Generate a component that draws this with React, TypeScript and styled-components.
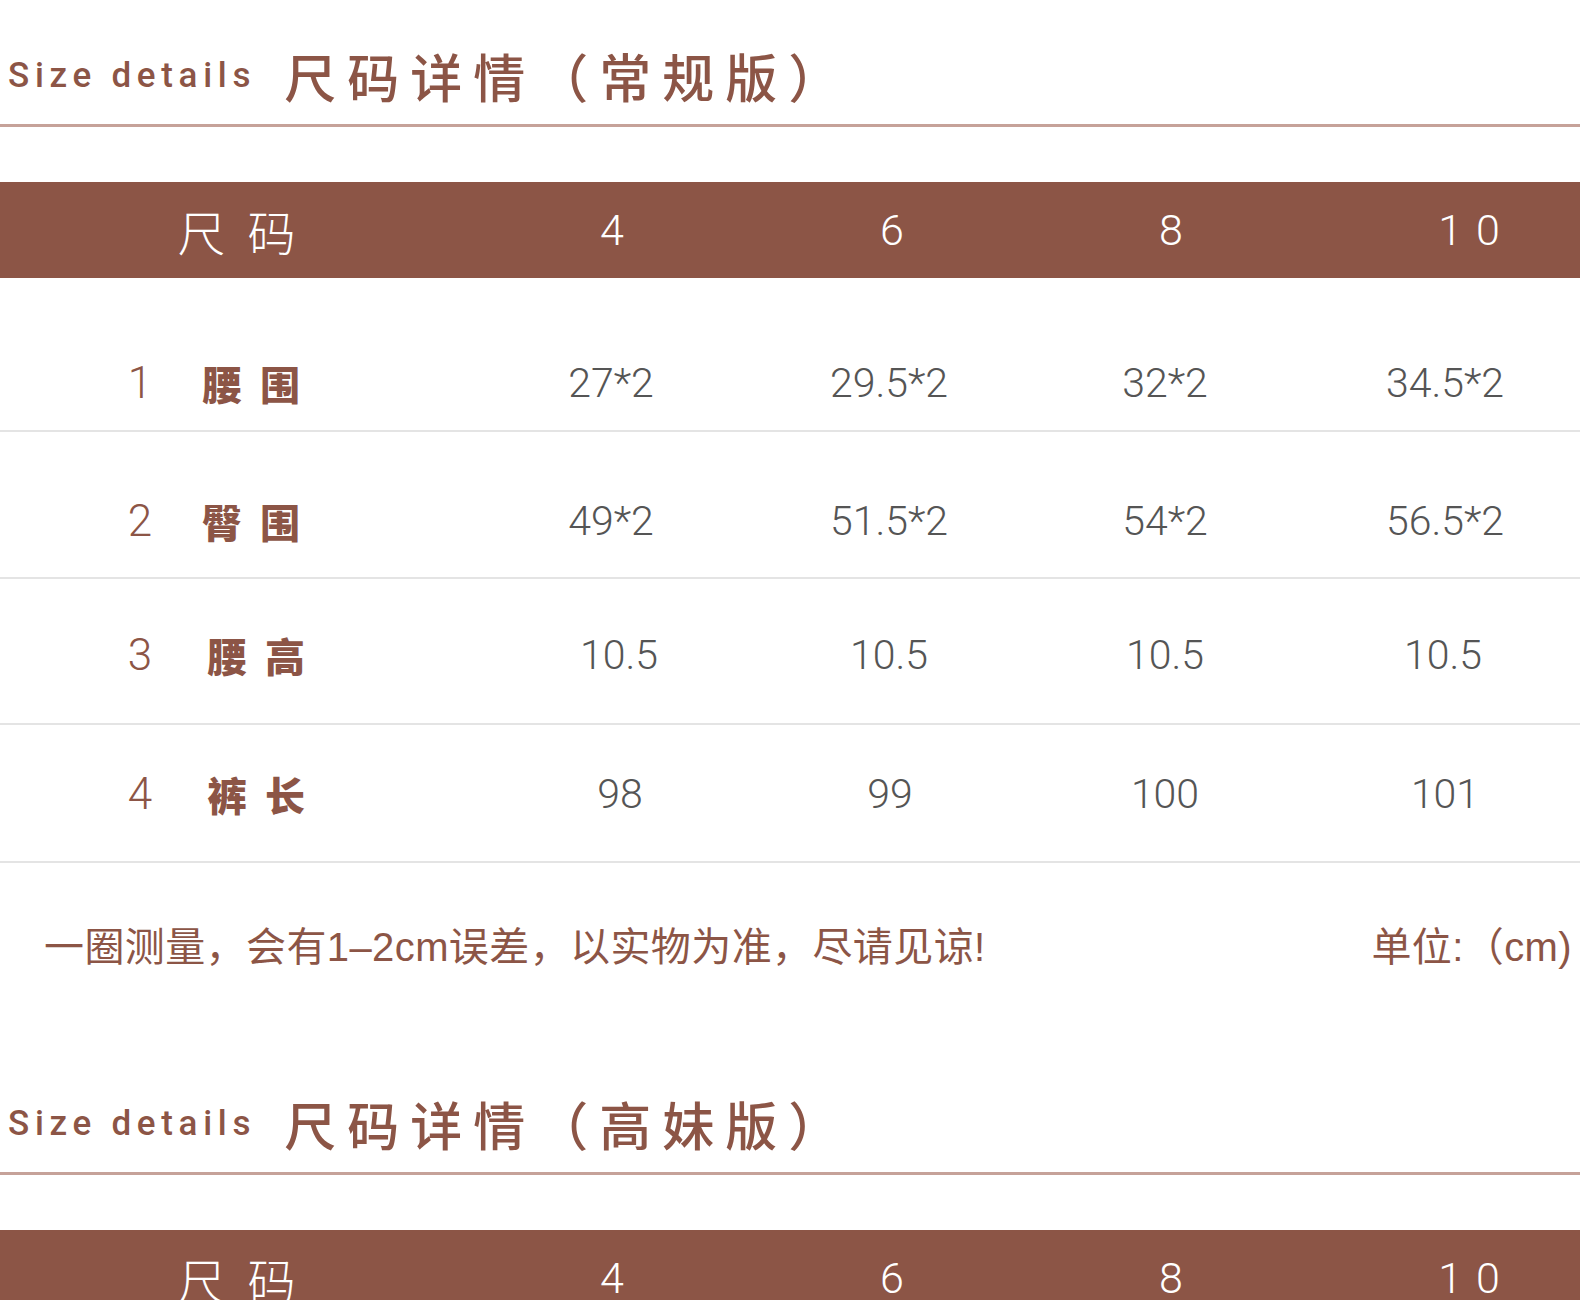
import React from 'react';
import styled, { createGlobalStyle } from 'styled-components';

const BROWN = '#8c5546';
const CJK = '"Noto Sans CJK SC", "Noto Sans CJK JP", sans-serif';
const LATIN = 'Roboto, "Liberation Sans", "Noto Sans CJK SC", sans-serif';
const NOTE_FONT = '"Liberation Sans", "Noto Sans CJK SC", sans-serif';

const GlobalStyle = createGlobalStyle`
  * { box-sizing: border-box; }
  html, body {
    margin: 0;
    padding: 0;
    background: #fff;
  }
`;

const Page = styled.div`
  width: 1580px;
  display: flex;
  flex-direction: column;
  background: #fff;
`;

const TitleBar = styled.div`
  height: 127px;
  padding: 27px 0 0 8px;
  display: flex;
  align-items: center;
  gap: 28px;
  border-bottom: 3px solid #c6a299;
`;

const TitleEn = styled.span`
  font-family: ${LATIN};
  font-weight: 500;
  font-size: 35px;
  letter-spacing: 5.7px;
  line-height: 1;
  color: ${BROWN};
`;

const TitleCn = styled.span`
  font-family: ${CJK};
  font-weight: 500;
  font-size: 52px;
  letter-spacing: 11px;
  line-height: 1;
  color: ${BROWN};
`;

const HeaderBar = styled.div`
  margin-top: 55px;
  height: 96px;
  background: ${BROWN};
  display: grid;
  grid-template-columns: 473px 278px 282px 276px 1fr;
  align-items: center;
  color: #fff;
`;

const HeaderCell = styled.div<{ $indent?: number; $cjk?: boolean }>`
  text-align: center;
  padding-left: ${(p) => p.$indent ?? 0}px;
  font-family: ${(p) => (p.$cjk ? CJK : LATIN)};
  font-weight: 300;
  font-size: ${(p) => (p.$cjk ? 48 : 43)}px;
  letter-spacing: ${(p) => (p.$cjk ? 22 : p.$indent ? 14 : 0)}px;
  line-height: 1;
`;

const Row = styled.div<{ $height: number; $pad: number }>`
  height: ${(p) => p.$height}px;
  padding-top: ${(p) => p.$pad}px;
  display: grid;
  grid-template-columns: 472px 278px 278px 274px 1fr;
  align-items: start;
  border-bottom: 2px solid #e4e4e4;
`;

const LabelCell = styled.div`
  height: 50px;
  display: flex;
  align-items: center;
  padding-left: 120px;
`;

const Num = styled.span`
  width: 40px;
  text-align: center;
  font-family: ${LATIN};
  font-weight: 300;
  font-size: 44px;
  line-height: 50px;
  color: ${BROWN};
`;

const Name = styled.span<{ $indent: number }>`
  margin-left: ${(p) => p.$indent}px;
  font-family: ${CJK};
  font-weight: 900;
  font-size: 40px;
  letter-spacing: 18px;
  line-height: 50px;
  color: ${BROWN};
`;

const Value = styled.div<{ $shift?: number }>`
  text-align: center;
  padding-left: ${(p) => p.$shift ?? 0}px;
  font-family: ${LATIN};
  font-weight: 300;
  font-size: 41px;
  line-height: 50px;
  color: #555;
`;

const Note = styled.div`
  height: 185px;
  padding: 59px 8px 0 44px;
  display: flex;
  justify-content: space-between;
  align-items: flex-start;
  font-family: ${NOTE_FONT};
  font-size: 40px;
  letter-spacing: 0.4px;
  line-height: 50px;
  color: ${BROWN};
`;

const sizes = ['4', '6', '8', '10'];

const rows = [
  { n: '1', name: '腰围', indent: 42, height: 154, pad: 80, shift: [0, 0, 0, 8], values: ['27*2', '29.5*2', '32*2', '34.5*2'] },
  { n: '2', name: '臀围', indent: 42, height: 147, pad: 64, shift: [0, 0, 0, 8], values: ['49*2', '51.5*2', '54*2', '56.5*2'] },
  { n: '3', name: '腰高', indent: 47, height: 146, pad: 51, shift: [16, 0, 0, 4], values: ['10.5', '10.5', '10.5', '10.5'] },
  { n: '4', name: '裤长', indent: 47, height: 138, pad: 44, shift: [18, 2, 0, 8], values: ['98', '99', '100', '101'] },
];

const SectionTitle = ({ edition }: { edition: string }) => (
  <TitleBar>
    <TitleEn>Size details</TitleEn>
    <TitleCn>尺码详情（{edition}）</TitleCn>
  </TitleBar>
);

const SizeHeader = () => (
  <HeaderBar>
    <HeaderCell $cjk $indent={22}>尺码</HeaderCell>
    {sizes.map((s) => (
      <HeaderCell key={s} $indent={s === '10' ? 63 : 0}>
        {s}
      </HeaderCell>
    ))}
  </HeaderBar>
);

export default function App() {
  return (
    <Page>
      <GlobalStyle />
      <SectionTitle edition="常规版" />
      <SizeHeader />
      {rows.map((r) => (
        <Row key={r.n} $height={r.height} $pad={r.pad}>
          <LabelCell>
            <Num>{r.n}</Num>
            <Name $indent={r.indent}>{r.name}</Name>
          </LabelCell>
          {r.values.map((v, i) => (
            <Value key={i} $shift={r.shift[i]}>
              {v}
            </Value>
          ))}
        </Row>
      ))}
      <Note>
        <span>一圈测量，会有1–2cm误差，以实物为准，尽请见谅!</span>
        <span>单位:（cm)</span>
      </Note>
      <SectionTitle edition="高妹版" />
      <SizeHeader />
    </Page>
  );
}
